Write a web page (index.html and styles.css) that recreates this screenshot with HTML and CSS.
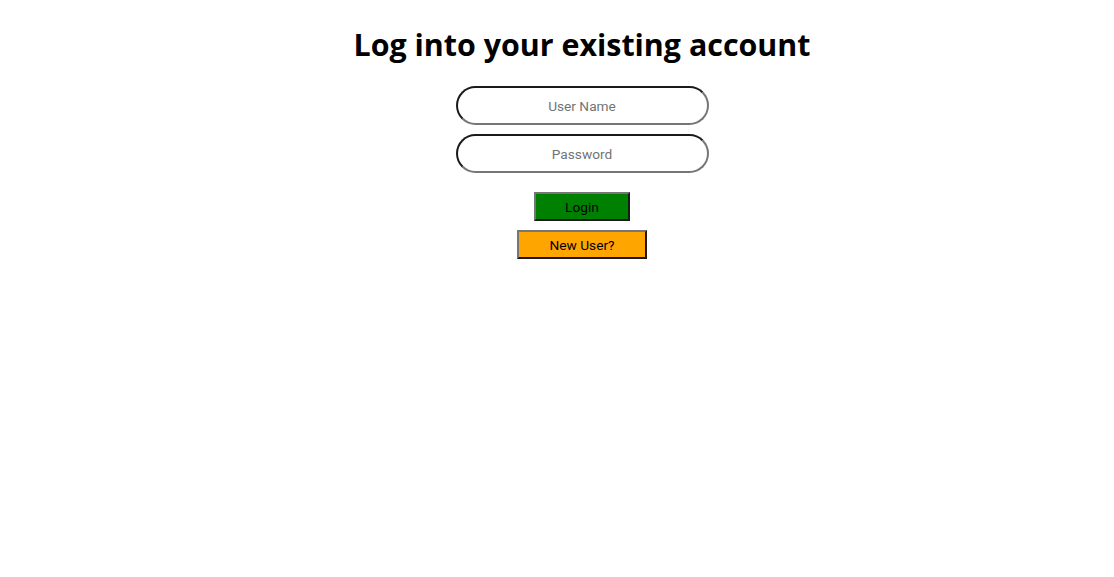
FILE: index.html
```html
<!DOCTYPE html>
<html>
<head>
<meta charset="utf-8">
<link rel="stylesheet" href="styles.css">
</head>
<body>
<main class="page">
  <h1 class="title">Log into your existing account</h1>
  <form class="form">
    <input class="field" type="text" placeholder="User Name">
    <input class="field" type="password" placeholder="Password">
    <button class="btn btn-login" type="button">Login</button>
    <button class="btn btn-new" type="button">New User?</button>
  </form>
</main>
</body>
</html>
```
FILE: styles.css
```css
html, body {
  margin: 0;
  background: #fff;
}
.page {
  padding: 8px 0 0 50px;
  display: flex;
  flex-direction: column;
  align-items: center;
}
.title {
  font-family: "Open Sans", "Noto Sans", sans-serif;
  font-weight: 700;
  font-size: 30.4px;
  line-height: 40px;
  margin: 17px 0 21px;
  color: #000;
}
.form {
  display: flex;
  flex-direction: column;
  align-items: center;
}
.field {
  box-sizing: border-box;
  width: 253px;
  height: 39px;
  border: 2px solid;
  border-top-color: #1a1a1a;
  border-left-color: #1a1a1a;
  border-right-color: #767676;
  border-bottom-color: #767676;
  border-radius: 20px;
  text-align: center;
  font-family: Roboto, sans-serif;
  font-size: 13.7px;
  margin: 0 0 9px;
  padding: 0 10px;
  outline: none;
}
.field::placeholder {
  color: #707478;
}
.btn {
  box-sizing: border-box;
  height: 29px;
  font-family: Roboto, sans-serif;
  font-size: 13.7px;
  color: #000;
  border: 2px solid;
  border-top-color: #767676;
  border-left-color: #767676;
  border-right-color: #1a1a1a;
  border-bottom-color: #1a1a1a;
  padding: 0;
}
.btn-login {
  width: 96px;
  background: #008000;
  margin-top: 10px;
}
.btn-new {
  width: 130px;
  background: #ffa500;
  margin-top: 9px;
}
```
